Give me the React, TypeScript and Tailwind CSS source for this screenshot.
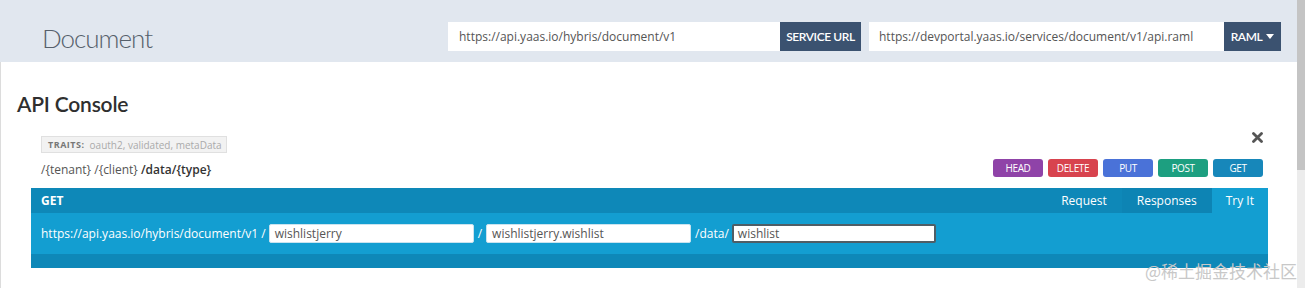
import React from 'react';

const methods = [
  { name: 'HEAD', color: 'bg-[#8f43a8]' },
  { name: 'DELETE', color: 'bg-[#d8434e]' },
  { name: 'PUT', color: 'bg-[#4a72d8]' },
  { name: 'POST', color: 'bg-[#1d9f80]' },
  { name: 'GET', color: 'bg-[#1787ba]' },
];

const sans = { fontFamily: '"Open Sans", "Liberation Sans", sans-serif' };

export default function App() {
  return (
    <div className="relative flex h-[288px] w-[1305px] overflow-hidden bg-white" style={sans}>
      <div className="flex flex-1 flex-col">
        {/* Top bar */}
        <header className="flex h-[62px] shrink-0 items-start bg-[#e1e7ef] pl-[42px] pr-[16px] pt-[22px]">
          <h1
            className="h-[29px] pt-[2px] text-[26px] font-light leading-[29px] tracking-[-1px] text-[#56606b]"
            style={{ fontFamily: 'Lato, "Open Sans", sans-serif' }}
          >
            Document
          </h1>
          <div className="ml-auto flex gap-[8px]">
            <div className="flex h-[29px]">
              <div className="flex w-[332px] items-center bg-white pl-[11px] text-[12px] text-[#555]">
                https://api.yaas.io/hybris/document/v1
              </div>
              <button
                className="w-[81px] bg-[#3b5270] text-[12px] font-semibold tracking-[-0.4px] text-white"
                style={{ fontFamily: 'Lato, sans-serif' }}
              >
                SERVICE URL
              </button>
            </div>
            <div className="flex h-[29px]">
              <div className="flex w-[355px] items-center bg-white pl-[10px] text-[12px] text-[#555]">
                https://devportal.yaas.io/services/document/v1/api.raml
              </div>
              <button
                className="flex w-[57px] items-center justify-center gap-[4px] bg-[#3b5270] text-[12px] font-semibold tracking-[-0.4px] text-white"
                style={{ fontFamily: 'Lato, sans-serif' }}
              >
                RAML
                <svg width="8" height="5" viewBox="0 0 8 5">
                  <path d="M0 0h8L4 5z" fill="white" />
                </svg>
              </button>
            </div>
          </div>
        </header>

        {/* Console */}
        <main className="flex-1 border-l border-[#dcdcdc] pt-[28px]">
          <h2
            className="pl-[16px] text-[21px] font-semibold leading-[28px] tracking-[-0.2px] text-[#2f2f2f]"
            style={{ fontFamily: 'Lato, "Open Sans", sans-serif' }}
          >
            API Console
          </h2>

          <section className="ml-[30px] mr-[29px] mt-[12px]">
            <div className="flex justify-between">
              <div className="pl-[10px] pt-[6px]">
                <div className="flex h-[17px] w-[186px] items-center gap-[5px] whitespace-nowrap border border-[#e0e0e0] bg-[#f2f2f2] px-[6px] leading-none">
                  <span className="text-[9px] font-bold tracking-[0.5px] text-[#777]">TRAITS:</span>
                  <span className="text-[10px] text-[#aaa]">oauth2, validated, metaData</span>
                </div>
                <div className="mt-[8px] text-[12px] leading-[18px]">
                  <span className="text-[#555]">/{'{tenant}'} /{'{client}'} </span>
                  <span className="font-semibold text-[#333]">/data/{'{type}'}</span>
                </div>
              </div>
              <div className="flex flex-col items-end pr-[5px]">
                <svg className="mt-[2px]" width="11" height="11" viewBox="0 0 11 11">
                  <path d="M1.5 1.5l8 8M9.5 1.5l-8 8" stroke="#555" strokeWidth="2.8" strokeLinecap="round" />
                </svg>
                <div className="mt-[16px] flex gap-[5px]">
                  {methods.map((m) => (
                    <button
                      key={m.name}
                      className={`${m.color} h-[18px] w-[50px] rounded-[3px] text-[10px] tracking-[-0.4px] text-white`}
                    >
                      {m.name}
                    </button>
                  ))}
                </div>
              </div>
            </div>

            <div className="mt-[9px]">
              <div className="flex h-[25px] items-stretch bg-[#0e88b8] text-[12px] text-white">
                <span className="flex items-center pl-[10px] font-bold">GET</span>
                <div className="ml-auto flex">
                  <span className="flex items-center px-[15px]">Request</span>
                  <span className="flex items-center bg-[#0d84b4] px-[15px]">Responses</span>
                  <span className="flex items-center bg-[#139ed1] px-[14px]">Try It</span>
                </div>
              </div>
              <div className="flex h-[41px] items-center bg-[#139ed1] pl-[10px] text-[12px] text-white">
                <span>https://api.yaas.io/hybris/document/v1 /</span>
                <div className="ml-[3px] flex h-[19px] w-[205px] items-center rounded-[2px] border border-[#c9e3ef] bg-white pl-[5px] text-[#555]">
                  wishlistjerry
                </div>
                <span className="mx-[4px]">/</span>
                <div className="flex h-[19px] w-[205px] items-center rounded-[2px] border border-[#c9e3ef] bg-white pl-[5px] text-[#555]">
                  wishlistjerry.wishlist
                </div>
                <span className="ml-[4px] mr-[3px]">/data/</span>
                <div className="flex h-[19px] w-[204px] items-center rounded-[2px] border-2 border-[#4f5e66] bg-white pl-[4px] text-[#555]">
                  wishlist
                </div>
              </div>
              <div className="h-[14px] bg-[#0e88b8]" />
            </div>
          </section>
        </main>
      </div>

      {/* Scrollbar */}
      <div className="flex w-[8px] flex-col bg-[#ececec]">
        <div className="h-[170px] bg-[#c4c4c4]" />
      </div>

      <span
        className="absolute bottom-[5px] right-[8px] text-[17px] text-[#c8c8c8]"
        style={{ fontFamily: '"Noto Sans CJK SC", sans-serif' }}
      >
        @稀土掘金技术社区
      </span>
    </div>
  );
}
